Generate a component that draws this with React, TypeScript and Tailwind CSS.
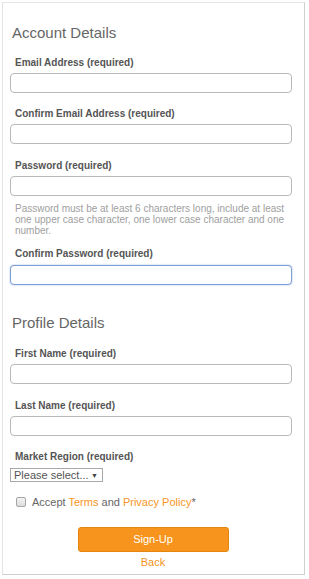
import React from 'react';

const labelCls = "block ml-[5px] h-[12px] leading-[12px] text-[10px] font-bold text-[#555555]";

function Field({ label, className, focused }: { label: string; className: string; focused?: boolean }) {
  return (
    <>
      <label className={`${labelCls} ${className}`}>{label}</label>
      <input
        type="text"
        className={
          focused
            ? "mt-[5px] block w-[282px] h-[20px] rounded-[4px] border border-[#7d9fd6] shadow-[0_0_2px_#9db8e4] bg-white px-2 text-[11px] outline-none"
            : "mt-[4px] block w-[282px] h-[20px] rounded-[4px] border border-[#b9b9b9] bg-white px-2 text-[11px] outline-none"
        }
      />
    </>
  );
}

export default function App() {
  return (
    <div className="w-[309px] h-[579px] bg-white font-['Liberation_Sans',Arial,sans-serif]">
      <div className="ml-[2px] mt-[2px] w-[303px] h-[573px] border border-[#e4e4e4] border-r-[#cfcfcf] border-b-[#cfcfcf] pl-[7px]">
        {/* Account */}
        <h2 className="mt-[21px] ml-[2px] h-[18px] leading-[18px] text-[15px] text-[#666666]">Account Details</h2>
        <Field label="Email Address (required)" className="mt-[15px]" />
        <Field label="Confirm Email Address (required)" className="mt-[15px]" />
        <Field label="Password (required)" className="mt-[16px]" />
        <p className="mt-[7px] ml-[5px] w-[272px] text-[10px] leading-[11px] text-[#a0a0a0]">
          Password must be at least 6 characters long, include at least one upper case character, one lower case character and one number.
        </p>
        <Field label="Confirm Password (required)" className="mt-[12px]" focused />

        {/* Profile */}
        <h2 className="mt-[29px] ml-[2px] h-[18px] leading-[18px] text-[15px] text-[#666666]">Profile Details</h2>
        <Field label="First Name (required)" className="mt-[16px]" />
        <Field label="Last Name (required)" className="mt-[16px]" />

        <label className={`${labelCls} mt-[15px]`}>Market Region (required)</label>
        <div className="relative mt-[5px] w-[93px] h-[14px] border border-[#a9a9a9] bg-white">
          <select className="block w-full h-full appearance-none bg-transparent pl-[3px] text-[11px] leading-[12px] text-[#555555] outline-none">
            <option>Please select...</option>
          </select>
          <span className="pointer-events-none absolute right-[4px] top-[1px] text-[7px] leading-[12px] text-[#444444]">▼</span>
        </div>

        <div className="mt-[13px] ml-[6px] flex items-center h-[14px]">
          <span className="w-[10px] h-[10px] rounded-[2px] border border-[#a6a6a6] bg-gradient-to-b from-[#f4f4f4] to-[#dcdcdc]" />
          <span className="ml-[6px] text-[11px] text-[#666666]">
            Accept <span className="text-[#f7941d]">Terms</span> and <span className="text-[#f7941d]">Privacy Policy</span>*
          </span>
        </div>

        <div className="flex flex-col items-center pr-[8px]">
          <button className="mt-[18px] w-[151px] h-[25px] rounded-[3px] border border-[#e3850f] bg-[#f7941d] text-[11px] text-white">
            Sign-Up
          </button>
          <a className="mt-[4px] h-[12px] leading-[12px] text-[11px] text-[#f7941d]">Back</a>
        </div>
      </div>
    </div>
  );
}
